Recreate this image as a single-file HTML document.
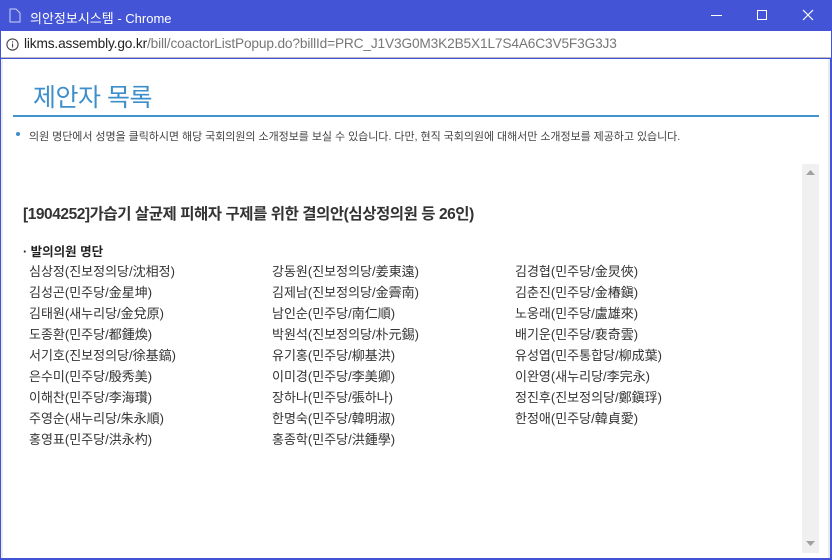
<!DOCTYPE html>
<html><head><meta charset="utf-8"><style>
*{margin:0;padding:0;box-sizing:border-box}
body{width:832px;height:560px;position:relative;overflow:hidden;background:#4353d6;font-family:"Liberation Sans","Noto Sans CJK KR",sans-serif}
.tb{position:absolute;left:0;top:0;width:832px;height:31px;background:#4454d6;color:#fff;font-size:12px}
.addr{position:absolute;left:1px;top:31px;width:830px;height:27px;background:#fff;border-bottom:1px solid #bbb;font-size:13.7px;color:#222}
.content{position:absolute;left:1px;top:59px;width:829px;height:499px;background:#fff;border:2px solid #ececec;border-top:none;border-bottom:none}
.abs{position:absolute;white-space:nowrap}
.n{position:absolute;font-size:13px;color:#333;white-space:nowrap;letter-spacing:0px}
</style></head><body>
<div class="tb">
<svg class="abs" style="left:9px;top:8px" width="12" height="15" viewBox="0 0 12 15"><path d="M1 1h6l4 4v9H1z" fill="none" stroke="#cfd3f2" stroke-width="1"/></svg>
<div class="abs" style="left:30px;top:8px;color:#fff;font-size:13px">의안정보시스템 - Chrome</div>
<div class="abs" style="left:711px;top:15px;width:11px;height:1px;background:#fff"></div>
<div class="abs" style="left:757px;top:10px;width:10px;height:10px;border:1px solid #fff"></div>
<svg class="abs" style="left:802px;top:9px" width="12" height="12"><path d="M1 1L11 11M11 1L1 11" stroke="#fff" stroke-width="1.2"/></svg>
</div>
<div class="addr">
<svg class="abs" style="left:5px;top:7px" width="13" height="13"><circle cx="6.5" cy="6.5" r="5.6" fill="none" stroke="#444" stroke-width="1.1"/><rect x="6" y="5.5" width="1.1" height="4" fill="#444"/><rect x="6" y="3.3" width="1.1" height="1.2" fill="#444"/></svg>
<div class="abs" style="left:23px;top:5px;letter-spacing:-0.15px">likms.assembly.go.kr<span style="color:#777">/bill/coactorListPopup.do?billId=PRC_J1V3G0M3K2B5X1L7S4A6C3V5F3G3J3</span></div>
</div>
<div class="content"></div>
<div class="abs" style="left:33px;top:78px;font-size:25px;color:#3d8fcb;letter-spacing:-0.5px">제안자 목록</div>
<div class="abs" style="left:13px;top:115px;width:806px;height:2px;background:#4394cc"></div>
<div class="abs" style="left:16px;top:132px;width:4px;height:4px;border-radius:50%;background:#3d8fcb"></div>
<div class="abs" style="left:29px;top:128px;font-size:11px;color:#444;letter-spacing:-0.05px">의원 명단에서 성명을 클릭하시면 해당 국회의원의 소개정보를 보실 수 있습니다. 다만, 현직 국회의원에 대해서만 소개정보를 제공하고 있습니다.</div>
<div class="abs" style="left:802px;top:164px;width:17px;height:389px;background:#f0f0f0"></div>
<svg class="abs" style="left:806px;top:170px" width="9" height="6"><path d="M0 5L4.5 0L9 5z" fill="#a0a0a0"/></svg>
<svg class="abs" style="left:806px;top:541px" width="9" height="6"><path d="M0 0L9 0L4.5 5z" fill="#a0a0a0"/></svg>
<div class="abs" style="left:23px;top:202px;font-size:15.5px;font-weight:bold;color:#333;letter-spacing:-0.45px">[1904252]가습기 살균제 피해자 구제를 위한 결의안(심상정의원 등 26인)</div>
<div class="abs" style="left:23px;top:241px;font-size:12.5px;font-weight:bold;color:#222">· 발의의원 명단</div>
<div class="n" style="left:29px;top:261px">심상정(진보정의당/沈相정)</div>
<div class="n" style="left:29px;top:282px">김성곤(민주당/金星坤)</div>
<div class="n" style="left:29px;top:303px">김태원(새누리당/金兌原)</div>
<div class="n" style="left:29px;top:324px">도종환(민주당/都鍾煥)</div>
<div class="n" style="left:29px;top:345px">서기호(진보정의당/徐基鎬)</div>
<div class="n" style="left:29px;top:366px">은수미(민주당/殷秀美)</div>
<div class="n" style="left:29px;top:387px">이해찬(민주당/李海瓚)</div>
<div class="n" style="left:29px;top:408px">주영순(새누리당/朱永順)</div>
<div class="n" style="left:29px;top:429px">홍영표(민주당/洪永杓)</div>
<div class="n" style="left:272px;top:261px">강동원(진보정의당/姜東遠)</div>
<div class="n" style="left:272px;top:282px">김제남(진보정의당/金霽南)</div>
<div class="n" style="left:272px;top:303px">남인순(민주당/南仁順)</div>
<div class="n" style="left:272px;top:324px">박원석(진보정의당/朴元錫)</div>
<div class="n" style="left:272px;top:345px">유기홍(민주당/柳基洪)</div>
<div class="n" style="left:272px;top:366px">이미경(민주당/李美卿)</div>
<div class="n" style="left:272px;top:387px">장하나(민주당/張하나)</div>
<div class="n" style="left:272px;top:408px">한명숙(민주당/韓明淑)</div>
<div class="n" style="left:272px;top:429px">홍종학(민주당/洪鍾學)</div>
<div class="n" style="left:515px;top:261px">김경협(민주당/金炅俠)</div>
<div class="n" style="left:515px;top:282px">김춘진(민주당/金椿鎭)</div>
<div class="n" style="left:515px;top:303px">노웅래(민주당/盧雄來)</div>
<div class="n" style="left:515px;top:324px">배기운(민주당/裵奇雲)</div>
<div class="n" style="left:515px;top:345px">유성엽(민주통합당/柳成葉)</div>
<div class="n" style="left:515px;top:366px">이완영(새누리당/李完永)</div>
<div class="n" style="left:515px;top:387px">정진후(진보정의당/鄭鎭琈)</div>
<div class="n" style="left:515px;top:408px">한정애(민주당/韓貞愛)</div>
</body></html>
